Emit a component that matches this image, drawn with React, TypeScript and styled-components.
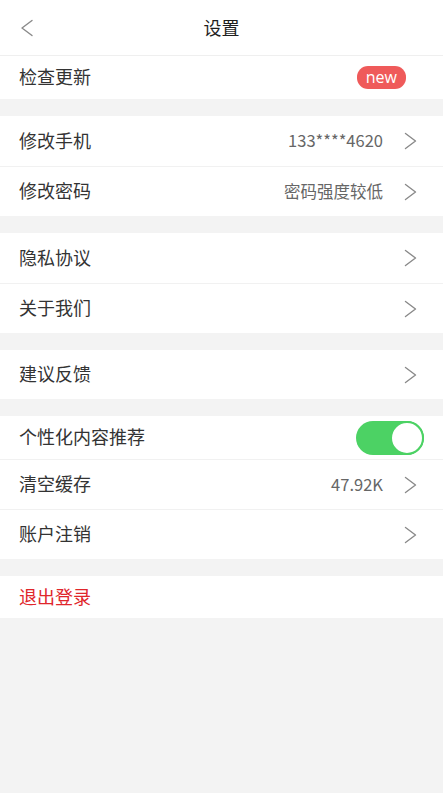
import React, { useState } from "react";
import styled, { createGlobalStyle } from "styled-components";

const Global = createGlobalStyle`
  html, body {
    margin: 0;
    padding: 0;
    background: #f3f3f3;
    font-family: "Noto Sans CJK SC", "Noto Sans", sans-serif;
  }
  * { box-sizing: border-box; }
`;

const Page = styled.div`
  width: 443px;
  min-height: 793px;
  background: #f3f3f3;
  display: flex;
  flex-direction: column;
`;

const Header = styled.header`
  height: 56px;
  background: #fff;
  border-bottom: 1px solid #efefef;
  display: grid;
  grid-template-columns: 60px 1fr 60px;
  align-items: center;
`;

const BackButton = styled.button`
  border: 0;
  background: none;
  padding: 0 0 0 20px;
  height: 55px;
  display: flex;
  align-items: center;
  cursor: pointer;
`;

const Title = styled.h1`
  margin: 0 0 2px;
  text-align: center;
  font-size: 18px;
  font-weight: 400;
  color: #1e1e1e;
`;

const Group = styled.section<{ $gap?: boolean }>`
  background: #fff;
  margin-top: ${(p) => (p.$gap ? "17px" : "0")};
  display: flex;
  flex-direction: column;
`;

const Row = styled.div<{ $h: number }>`
  height: ${(p) => p.$h}px;
  padding: 0 26px 0 19px;
  display: flex;
  align-items: center;
  & + & {
    border-top: 1px solid #f1f1f1;
  }
`;

const Label = styled.span<{ $danger?: boolean }>`
  flex: 1;
  font-size: 18px;
  margin-bottom: 3px;
  color: ${(p) => (p.$danger ? "#e0262b" : "#333")};
`;

const Value = styled.span`
  font-size: 16.5px;
  color: #666;
  margin: 0 21px 2px 0;
`;

const Badge = styled.span`
  background: #ef5a5a;
  color: #fff;
  font-family: "Open Sans", "Noto Sans", sans-serif;
  font-size: 16px;
  line-height: 22px;
  padding: 0 9px 1px;
  border-radius: 11px;
  margin-right: 11px;
`;

const Switch = styled.button<{ $on: boolean }>`
  width: 68px;
  height: 34px;
  border-radius: 17px;
  border: 0;
  padding: 0;
  background: ${(p) => (p.$on ? "#4cd264" : "#e5e5e5")};
  display: flex;
  justify-content: ${(p) => (p.$on ? "flex-end" : "flex-start")};
  align-items: center;
  margin-right: -7px;
  cursor: pointer;
`;

const Knob = styled.span`
  width: 34px;
  height: 34px;
  border-radius: 50%;
  background: #fff;
  border: 2px solid #4cd264;
`;

const Chevron = () => (
  <svg width="13" height="18" viewBox="0 0 13 18" fill="none">
    <path d="M1.5 1.5 L11.5 9 L1.5 16.5" stroke="#8a8a8a" strokeWidth="1.4" strokeLinecap="round" strokeLinejoin="round" />
  </svg>
);

const BackIcon = () => (
  <svg width="14" height="18" viewBox="0 0 14 18" fill="none">
    <path d="M12 1.5 L2 9 L12 16.5" stroke="#8a8a8a" strokeWidth="1.4" strokeLinecap="round" strokeLinejoin="round" />
  </svg>
);

export default function App() {
  const [personal, setPersonal] = useState(true);
  return (
    <Page>
      <Global />
      <Header>
        <BackButton aria-label="返回">
          <BackIcon />
        </BackButton>
        <Title>设置</Title>
        <span />
      </Header>

      <Group>
        <Row $h={43}>
          <Label>检查更新</Label>
          <Badge>new</Badge>
        </Row>
      </Group>

      <Group $gap>
        <Row $h={50}>
          <Label>修改手机</Label>
          <Value>133****4620</Value>
          <Chevron />
        </Row>
        <Row $h={50}>
          <Label>修改密码</Label>
          <Value>密码强度较低</Value>
          <Chevron />
        </Row>
      </Group>

      <Group $gap>
        <Row $h={50}>
          <Label>隐私协议</Label>
          <Chevron />
        </Row>
        <Row $h={50}>
          <Label>关于我们</Label>
          <Chevron />
        </Row>
      </Group>

      <Group $gap>
        <Row $h={49}>
          <Label>建议反馈</Label>
          <Chevron />
        </Row>
      </Group>

      <Group $gap>
        <Row $h={43}>
          <Label>个性化内容推荐</Label>
          <Switch $on={personal} onClick={() => setPersonal(!personal)} aria-label="个性化内容推荐">
            <Knob />
          </Switch>
        </Row>
        <Row $h={50}>
          <Label>清空缓存</Label>
          <Value>47.92K</Value>
          <Chevron />
        </Row>
        <Row $h={50}>
          <Label>账户注销</Label>
          <Chevron />
        </Row>
      </Group>

      <Group $gap>
        <Row $h={42}>
          <Label $danger>退出登录</Label>
        </Row>
      </Group>
    </Page>
  );
}
